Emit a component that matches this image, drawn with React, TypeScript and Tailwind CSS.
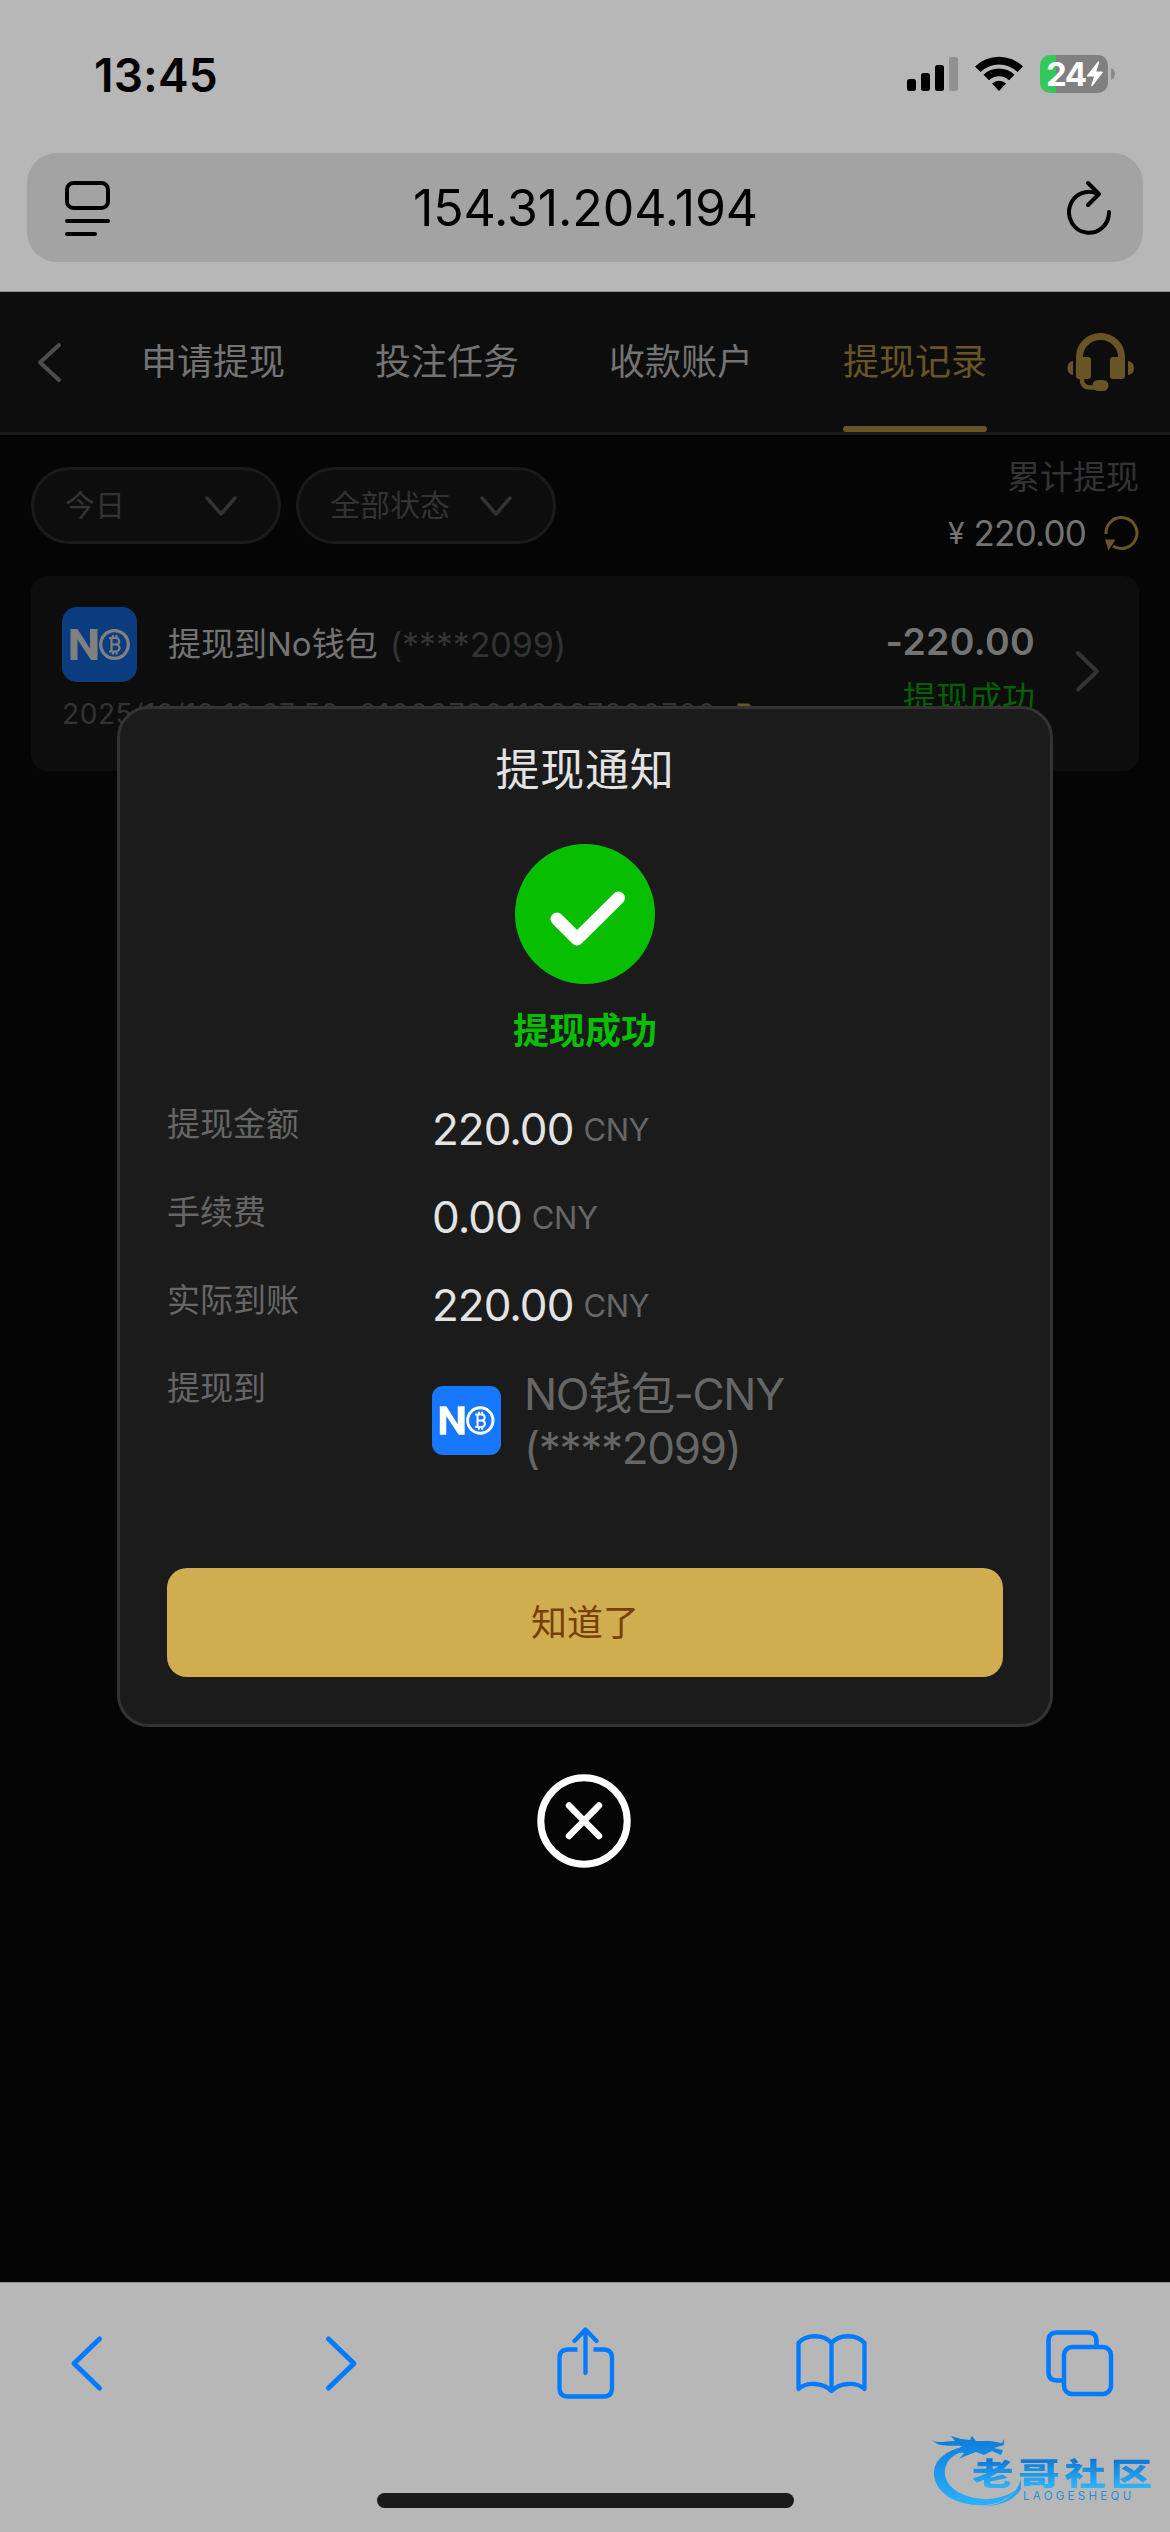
import React from "react";

function StatusBar() {
  return (
    <div className="flex h-[153px] items-start pl-[94px] pr-[54px] text-black">
      <div className="mt-[46px] h-[58px] w-[140px] whitespace-nowrap text-[46px] font-semibold leading-[58px] tracking-[0.2px]">13:45</div>
      <div className="mt-[55px] ml-auto flex items-start">
        <svg width="52" height="38" viewBox="0 0 52 38" className="block">
          <rect x="0" y="24" width="9" height="12" rx="2.5" />
          <rect x="14" y="18" width="9" height="18" rx="2.5" />
          <rect x="28" y="10" width="9" height="26" rx="2.5" />
          <rect x="42" y="2" width="9" height="34" rx="2.5" fill="#919191" />
        </svg>
        <svg width="50" height="38" viewBox="0 0 50 38" className="ml-[15px] block">
          <path d="M1 11.5 A34.5 34.5 0 0 1 49 11.5 L43.5 17 A26.5 26.5 0 0 0 6.500 17 Z" />
          <path d="M9.500 19.800 A22 22 0 0 1 40.500 19.800 L35 25.300 A14.500 14.500 0 0 0 15 25.300 Z" />
          <path d="M18 28.500 A10 10 0 0 1 32 28.500 L25 36 Z" />
        </svg>
        <div className="relative ml-[16px] flex h-[38px] w-[68px] items-center overflow-hidden rounded-[10px] bg-[linear-gradient(90deg,#34c759_16px,#808080_16px)] pl-[6px] text-[33px] font-bold leading-[38px] tracking-[-1.5px] text-white">
          24
          <svg width="18" height="26" viewBox="0 0 18 26" className="block shrink-0" fill="#fff">
            <path d="M12 0.500 L1 14.500 Q0.600 15.500 1.600 15.500 L8 15.500 L5.200 24.500 Q5.500 25.800 6.600 24.700 L16.800 11.500 Q17.200 10.500 16 10.500 L10.300 10.500 L13.300 1.200 Q13 -0.300 12 0.500 Z" />
          </svg>
        </div>
        <svg width="5" height="38" viewBox="0 0 5 38" className="ml-[3px] block">
          <path d="M0 13 Q4 14.500 4 19 Q4 23.500 0 25 Z" fill="#898989" />
        </svg>
      </div>
    </div>
  );
}

function AddressBar() {
  return (
    <div className="mx-[27px] flex h-[109px] items-center justify-between rounded-[30px] bg-[#a3a3a3] pl-[38px] pr-[30px]">
      <svg width="46" height="56" viewBox="0 0 46 56" fill="none" stroke="#000" strokeWidth="4" strokeLinecap="round">
        <rect x="2" y="3" width="41" height="25" rx="6.500" />
        <path d="M2 41 H43 M2 54 H30" />
      </svg>
      <div className="mr-[6px] whitespace-nowrap text-[50px] leading-[60px] tracking-[-0.100px] text-black">154.31.204.194</div>
      <svg width="47" height="58" viewBox="0 0 47 58" fill="none" stroke="#000" strokeWidth="4" strokeLinecap="round" strokeLinejoin="round">
        <path d="M43 33 A20 20.500 0 1 1 32 15" />
        <path d="M22 4 L33 15 L22 26" />
      </svg>
    </div>
  );
}

const tabs = ["申请提现", "投注任务", "收款账户", "提现记录"];

function NavTabs() {
  return (
    <div className="flex h-[143px] border-b-[3px] border-[#1a1a1a] bg-[#0d0d0d]">
      <svg width="102" height="140" viewBox="0 0 102 140" fill="none" stroke="#4d4d4d" strokeWidth="4" strokeLinecap="round" strokeLinejoin="round">
        <path d="M59 53 L40 70.500 L59 88" />
      </svg>
      <div className="ml-[39px] flex gap-[90px]">
        {tabs.map((t, i) => (
          <div
            key={t}
            className={
              i === 3
                ? "flex h-[140px] w-[144px] flex-col justify-between whitespace-nowrap text-[36px] leading-[140px] text-[#695426]"
                : "h-[140px] w-[144px] whitespace-nowrap text-[36px] leading-[140px] text-[#737373]"
            }
          >
            <span className="block h-[134px]">{t}</span>
            {i === 3 && <span className="block h-[6px] rounded-full bg-[#695426]" />}
          </div>
        ))}
      </div>
      <svg width="68" height="60" viewBox="0 0 68 60" className="mt-[40px] ml-[80px]" fill="#695426">
        <path d="M12.500 27 V25 A21 20.500 0 0 1 54.500 25 V27" fill="none" stroke="#695426" strokeWidth="7" />
        <rect x="9" y="25" width="15" height="22" rx="3" />
        <rect x="43" y="25" width="15" height="22" rx="3" />
        <path d="M6 29 Q0.500 30 0.500 36 Q0.500 42 6 43 Z M61 29 Q67 30 67 36 Q67 42 61 43 Z" />
        <path d="M15 46 V47 Q15 55.500 23 55.500 H30" fill="none" stroke="#695426" strokeWidth="4.500" />
        <rect x="25.500" y="48" width="16" height="11" rx="5.500" />
      </svg>
    </div>
  );
}

function Pill({ label, className }: { label: string; className: string }) {
  return (
    <div className={className}>
      <span className="-mt-[1px] whitespace-nowrap">{label}</span>
      <svg width="32" height="22" viewBox="0 0 32 22" fill="none" stroke="#333" strokeWidth="3.500" strokeLinecap="round" strokeLinejoin="round">
        <path d="M2 3 L16 19 L30 3" />
      </svg>
    </div>
  );
}

function NoLogo({ className, fg }: { className: string; fg: string }) {
  return (
    <div className={className}>
      <svg viewBox="0 0 75 75" className="h-full w-full" fill={fg}>
        <path d="M8.500 53 V22 H15.500 L28 41.500 V22 H35.500 V53 H29 L15.500 32.500 V53 Z" />
        <circle cx="52.500" cy="37.500" r="13.800" fill="none" stroke={fg} strokeWidth="3.200" />
        <path d="M47 31 H54 A3.200 3.200 0 0 1 54 37.500 H49 M54 37.500 A3.500 3.500 0 0 1 54 44.500 H47 M49.500 31 V44.500 M51 28 V31 M54.500 28 V31 M51 44.500 V47.500 M54.500 44.500 V47.500" fill="none" stroke={fg} strokeWidth="2.200" />
      </svg>
    </div>
  );
}

function Filters() {
  return (
    <div className="flex h-[141px] items-start pl-[31px] pr-[31px]">
      <Pill label="今日" className="mt-[32px] flex h-[77px] w-[250px] items-center justify-between rounded-full border-[3px] border-[#1a1a1a] bg-[#0d0d0d] pl-[31px] pr-[41px] text-[30px] text-[#333]" />
      <Pill label="全部状态" className="mt-[32px] ml-[15px] flex h-[77px] w-[260px] items-center justify-between rounded-full border-[3px] border-[#1a1a1a] bg-[#0d0d0d] pl-[31px] pr-[41px] text-[30px] text-[#333]" />
      <div className="ml-auto flex flex-col items-end">
        <div className="mt-[18px] h-[48px] text-[33px] leading-[48px] text-[#333]">累计提现</div>
        <div className="mt-[8px] flex h-[48px] items-center">
          <span className="mr-[9px] text-[30px] text-[#737373]">¥</span>
          <span className="text-[35px] leading-[48px] tracking-[-0.8px] text-[#737373]">220.00</span>
          <svg width="36" height="36" viewBox="0 0 36 36" className="ml-[17px]" fill="none" stroke="#695426" strokeWidth="3">
            <path d="M3 19 A15.500 15.500 0 1 1 10 31" />
            <path d="M2 24.500 H12.500 L5.500 35.500 Z" fill="#695426" stroke="none" />
          </svg>
        </div>
      </div>
    </div>
  );
}

function RecordCard() {
  return (
    <div className="mx-[31px] flex h-[195px] rounded-[16px] bg-[#0d0d0d]">
      <div className="ml-[31px] flex w-[700px] flex-col">
        <div className="mt-[31px] flex h-[75px] items-center">
          <NoLogo className="h-[75px] w-[75px] rounded-[15px] bg-[#0c3c80]" fg="#808080" />
          <span className="ml-[31px] whitespace-nowrap text-[33px] text-[#737373]">提现到No钱包</span>
          <span className="ml-[12px] whitespace-nowrap text-[34px] tracking-[-0.1px] text-[#333]">(****2099)</span>
        </div>
        <div className="mt-[12px] flex h-[40px] items-center whitespace-nowrap text-[28px] tracking-[0.6px] text-[#333]">
          <span>2025/10/12 12:07:50</span>
          <span className="ml-[20px] tracking-[1.7px]">21003730112367300720</span>
          <svg width="18" height="24" viewBox="0 0 18 24" className="ml-[20px]" fill="none" stroke="#695426" strokeWidth="3">
            <path d="M2 22 V3 H11 L16 8 V22 Z" />
          </svg>
        </div>
      </div>
      <div className="ml-auto flex w-[240px] flex-col items-end">
        <div className="mt-[43px] h-[46px] whitespace-nowrap text-[37.500px] font-semibold leading-[46px] tracking-[0.3px] text-[#737373]">-220.00</div>
        <div className="mt-[10px] h-[46px] whitespace-nowrap text-[33px] leading-[46px] text-[#036003]">提现成功</div>
      </div>
      <svg width="28" height="44" viewBox="0 0 28 44" className="mt-[74px] mr-[36px] ml-[40px]" fill="none" stroke="#333" strokeWidth="4" strokeLinecap="round" strokeLinejoin="round">
        <path d="M3 3 L22 21.500 L3 39.500" />
      </svg>
    </div>
  );
}

const rows = [
  ["提现金额", "220.00"],
  ["手续费", "0.00"],
  ["实际到账", "220.00"],
];

function Modal() {
  return (
    <div className="absolute top-[706px] left-[117px] flex h-[1021px] w-[936px] flex-col rounded-[32px] border-[3px] border-[#333] bg-[#1b1b1b] px-[47px]">
      <div className="mt-[28px] h-[66px] text-center text-[44px] leading-[66px] tracking-[0.8px] text-[#e3e3e3]">提现通知</div>
      <div className="mx-auto mt-[41px] h-[140px] w-[140px] rounded-full bg-[#08be00]">
        <svg width="140" height="140" viewBox="0 0 140 140" fill="none" stroke="#fff" strokeWidth="13" strokeLinecap="round" strokeLinejoin="round">
          <path d="M42 75 L62 95 L103.500 54" />
        </svg>
      </div>
      <div className="mt-[20px] h-[54px] text-center text-[36px] font-bold leading-[54px] text-[#08be00]">提现成功</div>
      <div className="mt-[42px] flex flex-col">
        {rows.map(([label, value]) => (
          <div key={label} className="flex h-[88px] items-start">
            <span className="w-[265px] text-[33px] leading-[48px] text-[#666]">{label}</span>
            <span className="flex items-center whitespace-nowrap leading-[56px]">
              <span className="text-[44px] tracking-[-1px] text-[#e3e3e3]">{value}</span>
              <span className="ml-[10px] pt-[2px] text-[31px] tracking-[-0.4px] text-[#666]">CNY</span>
            </span>
          </div>
        ))}
        <div className="flex h-[180px] items-start">
          <span className="w-[265px] text-[33px] leading-[48px] text-[#666]">提现到</span>
          <NoLogo className="mt-[22px] h-[69px] w-[69px] rounded-[11px] bg-[#1778ff]" fg="#fff" />
          <span className="mt-[3px] ml-[23px] whitespace-nowrap text-[44px] leading-[54px] tracking-[-1.3px] text-[#666]">
            NO钱包-CNY
            <br />
            (****2099)
          </span>
        </div>
      </div>
      <div className="mt-[24px] flex h-[109px] shrink-0 items-center justify-center rounded-[20px] bg-[#d0ae50] text-[36px] text-[#783e06]">知道了</div>
    </div>
  );
}

function CloseButton() {
  return (
    <svg width="94" height="94" viewBox="0 0 94 94" className="absolute top-[1774px] left-[537px]" fill="none" stroke="#fff" strokeWidth="7">
      <circle cx="47" cy="47" r="43.200" />
      <path d="M32 31.500 L62 62 M62 31.500 L32 62" strokeWidth="6.500" strokeLinecap="round" />
    </svg>
  );
}

function Watermark() {
  return (
    <div className="absolute top-[2428px] left-[930px] h-[80px] w-[226px]">
      <svg width="226" height="80" viewBox="0 0 226 80" className="block" fill="url(#wm)">
        <defs>
          <linearGradient id="wm" x1="0" y1="4" x2="0" y2="78" gradientUnits="userSpaceOnUse">
            <stop offset="0" stopColor="#0a78d8" />
            <stop offset="1" stopColor="#2cb2fa" />
          </linearGradient>
        </defs>
        <path d="M28 20 C10 26 3 36 4 47 C6 68 32 79 56 77 C74 75 87 66 91 51 L91 61 C85 72 70 79 53 78 C66 77 78 73 86 62 C74 70 58 73 45 70 C24 66 13 54 15 41 C17 31 25 25 36 23 Z" />
        <path d="M2 12 C8 16 15 13 25 13 L21 8 L31 11 L40 12 L42 8 L46 13 L60 13 L72 15 L74 11 L74 17 L64 20 L73 22 L71 27 L62 23 L54 27 L46 24 L38 27 L29 31 L34 25 L24 24 L32 18 C20 17 10 20 2 12 Z" />
      </svg>
      <div className="absolute top-[28px] left-[42px] h-[32px] origin-left scale-x-[1.34] bg-[linear-gradient(180deg,#0a74d4_5%,#2cb2fa_95%)] bg-clip-text font-['Noto_Sans_CJK_SC',sans-serif] text-[31px] font-black leading-[32px] tracking-[3.500px] whitespace-nowrap text-transparent">老哥社区</div>
      <div className="absolute top-[63px] left-[93px] text-[11.500px] leading-[10px] tracking-[3.300px] whitespace-nowrap text-[#258fdc]">LAOGESHEQU</div>
    </div>
  );
}

function BottomBar() {
  return (
    <div className="h-[250px] border-t border-[#8c8c8c] bg-[#b7b7b7]">
      <div className="flex h-[160px] items-center justify-between pt-[2px] pr-[54px] pl-[69px]">
        <svg width="35" height="60" viewBox="0 0 35 60" fill="none" stroke="#007aff" strokeWidth="5" strokeLinecap="round" strokeLinejoin="round">
          <path d="M30.500 5 L5 29.500 L30.500 54" />
        </svg>
        <svg width="35" height="60" viewBox="0 0 35 60" className="ml-[218px]" fill="none" stroke="#007aff" strokeWidth="5" strokeLinecap="round" strokeLinejoin="round">
          <path d="M4.500 5 L30 29.500 L4.500 54" />
        </svg>
        <svg width="58" height="74" viewBox="0 0 58 74" className="ml-[196px]" fill="none" stroke="#007aff" strokeWidth="4.300">
          <path d="M20.500 22.500 H11 Q2.500 22.500 2.500 31 V61 Q2.500 69.500 11 69.500 H46.500 Q55 69.500 55 61 V31 Q55 22.500 46.500 22.500 H36.500" />
          <path d="M28.500 46 V3 M17.500 14 L28.500 2.500 L39.500 14" strokeLinecap="round" strokeLinejoin="round" />
        </svg>
        <svg width="72" height="60" viewBox="0 0 72 60" className="ml-[180px]" fill="none" stroke="#007aff" strokeWidth="4.300" strokeLinejoin="round" strokeLinecap="round">
          <path d="M35.500 9 C28 0 10 0 2.500 9 V55 C10 48 27 48 35.500 57 C44 48 61 48 68.500 55 V9 C61 0 43 0 35.500 9 V57" />
        </svg>
        <svg width="70" height="68" viewBox="0 0 70 68" className="ml-[176px]" fill="none" stroke="#007aff" strokeWidth="4.500">
          <path d="M50.500 15 V11 Q50.500 2.500 42 2.500 H11 Q2.500 2.500 2.500 11 V42 Q2.500 50.500 11 50.500 H16" />
          <rect x="18" y="17" width="47" height="47" rx="8" />
        </svg>
      </div>
      <div className="mx-auto mt-[50px] h-[15px] w-[417px] rounded-full bg-[#1a1a1a]" />
    </div>
  );
}

export default function App() {
  return (
    <div className="relative flex h-[2532px] w-[1170px] flex-col overflow-hidden bg-[#050505] font-['Inter','Noto_Sans_CJK_SC',sans-serif]">
      <div className="h-[292px] border-b border-[#8c8c8c] bg-[#b7b7b7]">
        <StatusBar />
        <AddressBar />
      </div>
      <NavTabs />
      <Filters />
      <RecordCard />
      <div className="flex-1" />
      <BottomBar />
      <Modal />
      <CloseButton />
      <Watermark />
    </div>
  );
}
